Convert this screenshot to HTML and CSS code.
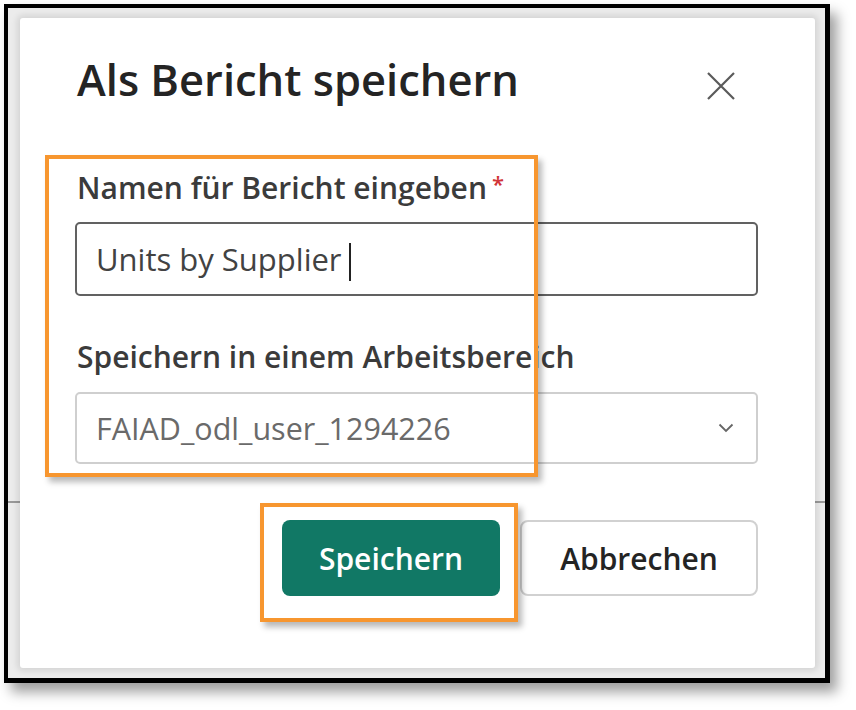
FILE: index.html
```html
<!DOCTYPE html>
<html lang="de">
<head>
<meta charset="utf-8">
<title>Als Bericht speichern</title>
<link rel="stylesheet" href="styles.css">
</head>
<body>
<div class="frame">
  <div class="dialog">
    <div class="header">
      <h1 class="title">Als Bericht speichern</h1>
      <button class="close" aria-label="Schließen">
        <svg width="30" height="30" viewBox="0 0 30 30"><path d="M2 2 L28 28 M28 2 L2 28" stroke="#5a5a5a" stroke-width="2.2" fill="none"/></svg>
      </button>
    </div>
    <div class="body">
      <label class="label">Namen für Bericht eingeben<span class="req">*</span></label>
      <div class="input"><span class="value">Units by Supplier</span><span class="caret"></span></div>
      <label class="label label-ws">Speichern in einem Arbeitsbereich</label>
      <div class="select">
        <span class="select-value">FAIAD_odl_user_1294226</span>
        <svg class="chev" width="16" height="10" viewBox="0 0 16 10"><path d="M1.5 1.5 L8 8 L14.5 1.5" stroke="#666" stroke-width="1.8" fill="none"/></svg>
      </div>
    </div>
    <div class="footer">
      <button class="btn btn-primary">Speichern</button>
      <button class="btn btn-secondary">Abbrechen</button>
    </div>
    <div class="mark mark-fields"></div>
    <div class="mark mark-save"></div>
  </div>
</div>
</body>
</html>
```
FILE: styles.css
```css
html, body {
  margin: 0;
  padding: 0;
  background: #ffffff;
}
body {
  width: 856px;
  height: 710px;
  font-family: "Open Sans", "Noto Sans", sans-serif;
}
.frame {
  box-sizing: border-box;
  margin: 4px 0 0 4px;
  width: 826px;
  height: 679px;
  border: 4px solid #000;
  border-right-width: 5px;
  border-bottom-width: 5px;
  padding: 10px 10px 10px 12px;
  background:
    linear-gradient(to bottom, transparent 493px, #9a9a9a 493px, #9a9a9a 495px, transparent 495px),
    #ececec;
  box-shadow: 7px 9px 12px rgba(0,0,0,0.38);
}
.dialog {
  position: relative;
  box-sizing: border-box;
  height: 100%;
  background: #fff;
  border-radius: 3px;
  box-shadow: 0 0 6px 3px rgba(0,0,0,0.10);
  padding: 0 57px 0 55px;
}
.header {
  box-sizing: border-box;
  display: flex;
  align-items: flex-start;
  justify-content: space-between;
  height: 150px;
  padding-top: 33px;
}
.title {
  margin: 0 0 0 2px;
  font-size: 43.5px;
  line-height: 58px;
  font-weight: 600;
  color: #242424;
}
.close {
  border: 0;
  background: none;
  padding: 0;
  width: 30px;
  height: 30px;
  margin: 20px 22px 0 0;
  display: flex;
}
.body {
  display: flex;
  flex-direction: column;
}
.label {
  display: block;
  margin: 0 0 0 2px;
  font-size: 30px;
  font-weight: 600;
  color: #3b3b3b;
  line-height: 40px;
}
.req {
  color: #d13438;
  margin-left: 5px;
  font-size: 22px;
  vertical-align: top;
  position: relative;
  top: -5px;
}
.input {
  margin-top: 14px;
  box-sizing: border-box;
  height: 74px;
  border: 2px solid #616161;
  border-radius: 5px;
  display: flex;
  align-items: center;
  padding-left: 19px;
}
.value {
  font-size: 31px;
  color: #424242;
}
.caret {
  display: inline-block;
  width: 2px;
  height: 38px;
  background: #222;
  margin-left: 7px;
  position: relative;
  top: 3px;
}
.label-ws {
  margin-top: 41px;
}
.select {
  margin-top: 15px;
  box-sizing: border-box;
  height: 72px;
  border: 2px solid #cfcfcf;
  border-radius: 5px;
  display: flex;
  align-items: center;
  justify-content: space-between;
  padding: 0 22px 0 19px;
}
.select-value {
  font-size: 30.5px;
  color: #6a6a6a;
}
.footer {
  display: flex;
  justify-content: flex-end;
  gap: 20px;
  margin-top: 56px;
}
.btn {
  box-sizing: border-box;
  height: 76px;
  border-radius: 8px;
  font-family: "Open Sans", "Noto Sans", sans-serif;
  font-size: 30px;
  font-weight: 600;
  cursor: pointer;
}
.btn-primary {
  width: 218px;
  background: #117865;
  color: #fff;
  border: 0;
}
.btn-secondary {
  width: 238px;
  background: #fff;
  color: #242424;
  border: 2px solid #d1d1d1;
}
.mark {
  position: absolute;
  box-sizing: border-box;
  border: 4px solid #f7962f;
  box-shadow: 4px 5px 6px rgba(0,0,0,0.28);
}
.mark-fields {
  left: 25px;
  top: 137px;
  width: 493px;
  height: 322px;
}
.mark-save {
  left: 240px;
  top: 485px;
  width: 258px;
  height: 119px;
}
```
